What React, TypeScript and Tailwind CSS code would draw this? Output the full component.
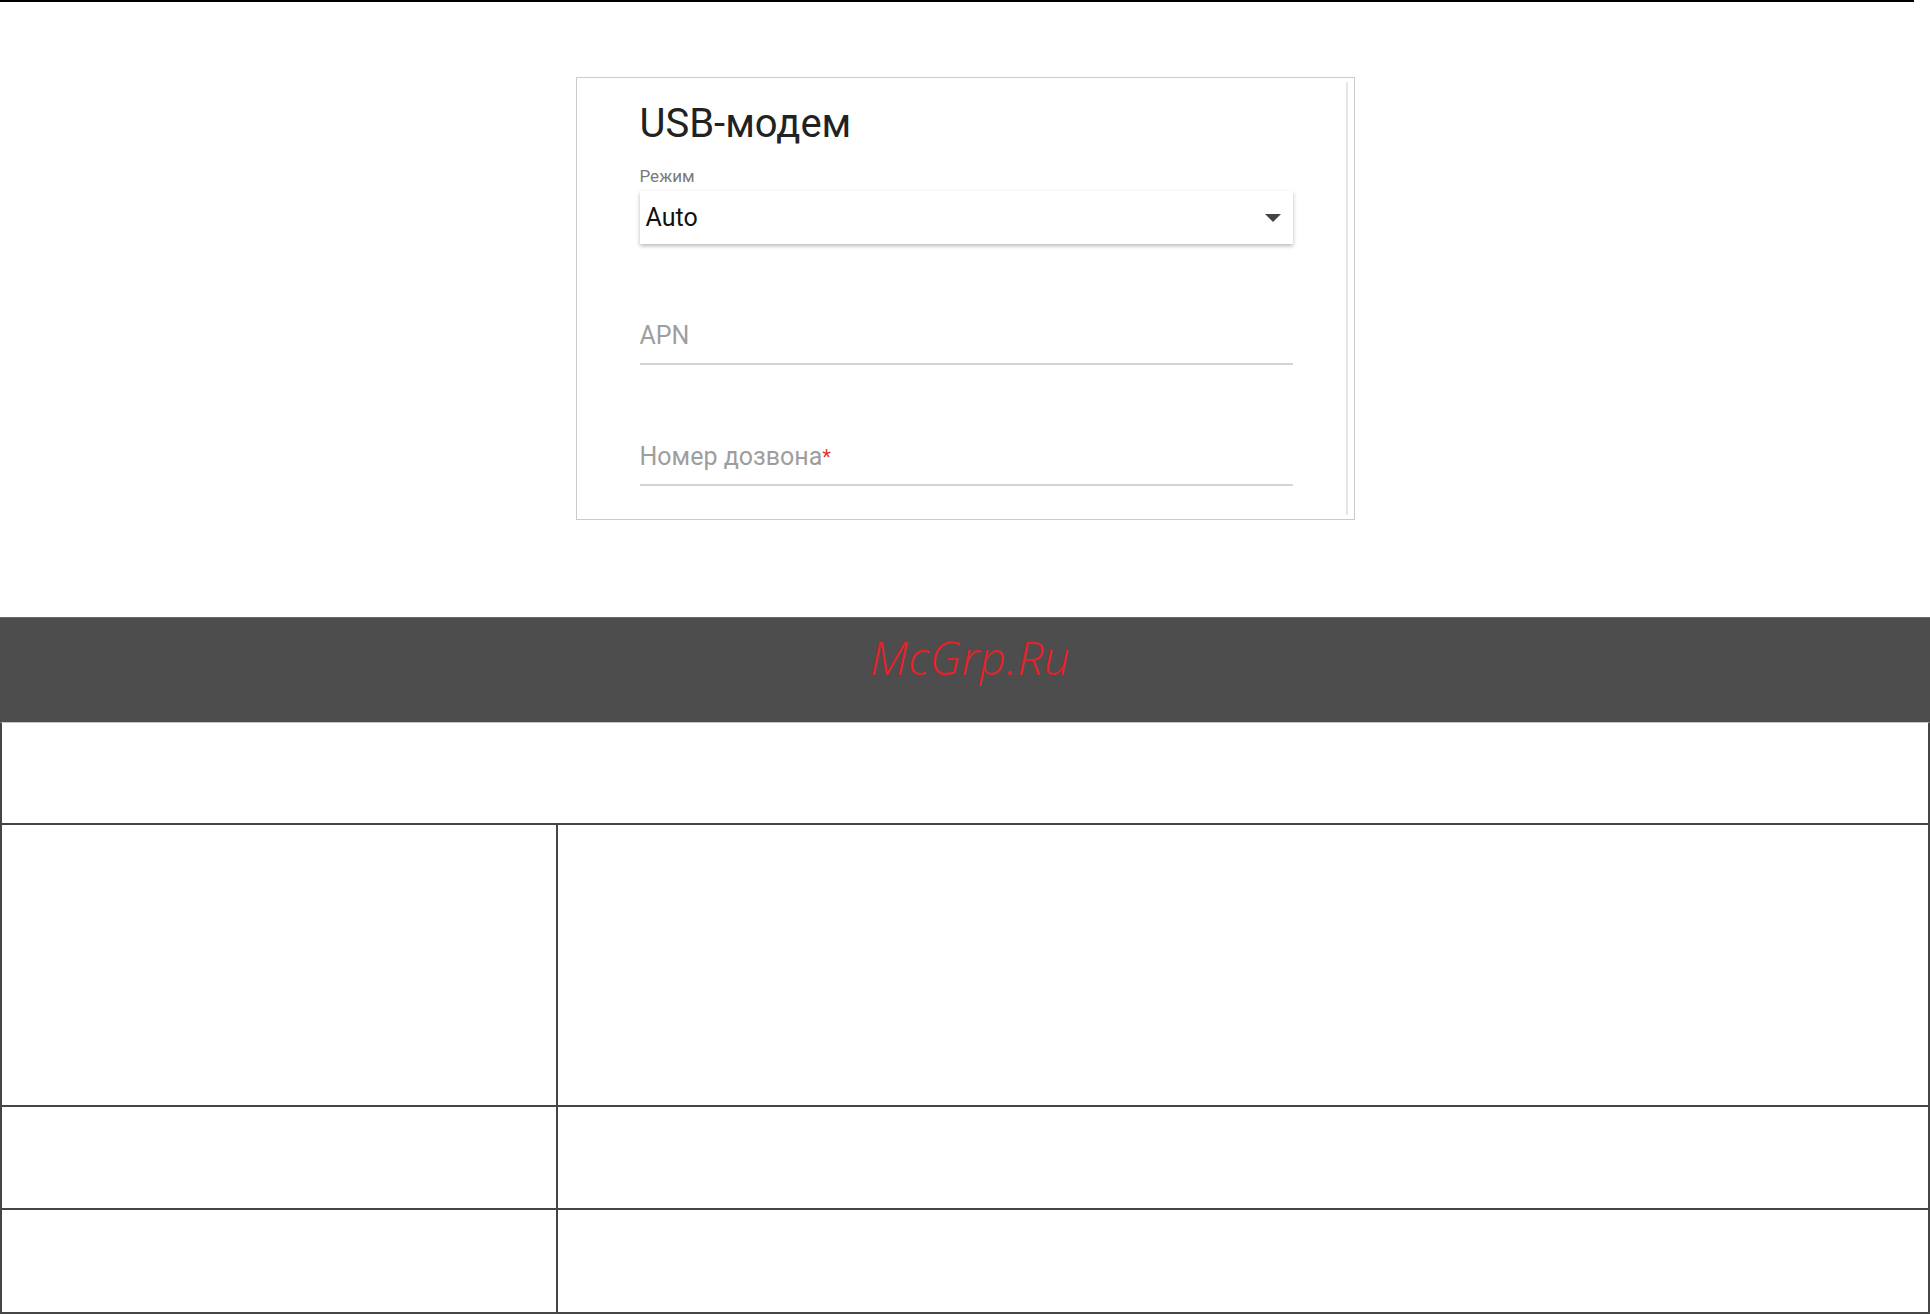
import React from 'react';

const roboto = { fontFamily: 'Roboto, "Liberation Sans", sans-serif' };

function Field({ label, required }: { label: string; required?: boolean }) {
  return (
    <div className="flex flex-col mt-[77px]">
      <div className="h-[30px] leading-[30px] text-[25px] text-[#9e9e9e]">
        {label}
        {required && <span className="text-[#e53935] text-[20px] align-top">*</span>}
      </div>
      <div className="mt-[12px] h-[2px] bg-[#d4d4d4]" />
    </div>
  );
}

export default function App() {
  return (
    <div className="w-[1930px] min-h-[1314px] bg-white flex flex-col" style={roboto}>
      {/* top rule */}
      <div className="h-[2px] w-[1914px] bg-black" />

      {/* USB modem card */}
      <div className="relative mx-auto mt-[75px] w-[779px] h-[443px] border border-[#cbcbcb] bg-white">
        <div className="absolute right-[6px] top-[4px] bottom-[4px] w-[2px] bg-[#e6e6e6]" />
        <div className="flex flex-col pl-[63px] w-[716px] pt-[22px]">
          <h1 className="text-[40px] leading-[48px] text-[#222] font-normal">USB-модем</h1>

          <div className="mt-[18px] text-[17px] leading-[20px] text-[#7a7a7a]">Режим</div>
          <div className="mt-[5px] h-[53px] bg-white shadow-[0_2px_4px_rgba(0,0,0,0.28)] flex items-center justify-between pl-[6px] pr-[12px]">
            <span className="text-[25px] text-[#111] leading-none">Auto</span>
            <svg width="16" height="8" viewBox="0 0 16 8">
              <path d="M0 0 L16 0 L8 8 Z" fill="#444" />
            </svg>
          </div>

          <Field label="APN" />
          <Field label="Номер дозвона" required />
        </div>
      </div>

      {/* dark banner */}
      <div className="mt-[97px] h-[105px] bg-[#4d4d4d] border-t border-[#6a6a6a] flex justify-center pt-[16px] pl-[10px]">
        <span
          className="italic text-[46px] leading-[46px] text-[#e3222a] tracking-[0.5px] font-light"
          style={{ fontFamily: '"Open Sans", "DejaVu Sans", sans-serif' }}
        >
          McGrp.Ru
        </span>
      </div>

      {/* table */}
      <div className="flex flex-col border-t border-[#c6c6c6] border-x-2 border-x-[#454545] w-[1930px]">
        <div className="h-[102px] border-b-2 border-[#454545]" />
        <div className="h-[282px] border-b-2 border-[#454545] grid grid-cols-[556px_1fr]">
          <div className="border-r-2 border-[#454545]" />
          <div />
        </div>
        <div className="h-[103px] border-b-2 border-[#454545] grid grid-cols-[556px_1fr]">
          <div className="border-r-2 border-[#454545]" />
          <div />
        </div>
        <div className="h-[104px] border-b-2 border-[#454545] grid grid-cols-[556px_1fr]">
          <div className="border-r-2 border-[#454545]" />
          <div />
        </div>
      </div>
    </div>
  );
}
